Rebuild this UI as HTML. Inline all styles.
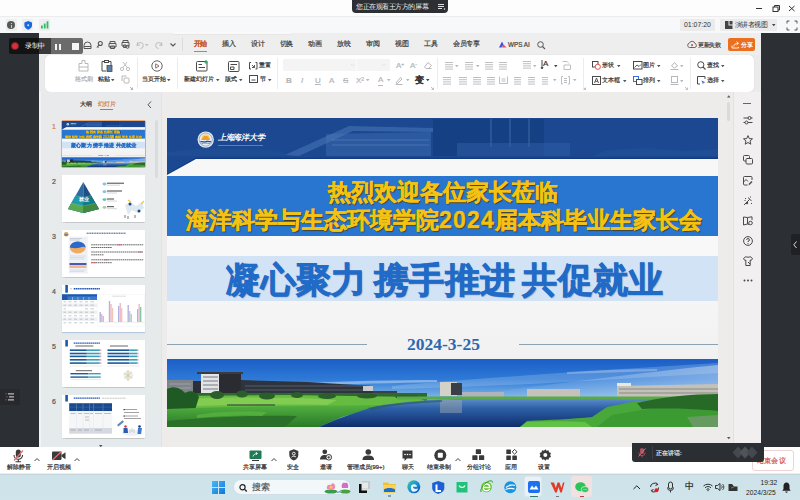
<!DOCTYPE html>
<html><head><meta charset="utf-8">
<style>
*{box-sizing:border-box;margin:0;padding:0}
html,body{width:800px;height:500px;overflow:hidden;background:#fff;font-family:"Liberation Sans",sans-serif;position:relative}
.a{position:absolute}
.t{position:absolute;white-space:nowrap;line-height:1}
svg{position:absolute;overflow:visible}
.tab{position:absolute;top:41px;font-size:6.5px;letter-spacing:-.5px;color:#3a3a3a;white-space:nowrap;line-height:1;-webkit-text-stroke:.2px currentColor}
.rl{position:absolute;font-size:6px;color:#3a3a3a;white-space:nowrap;line-height:1;-webkit-text-stroke:.2px currentColor}
.g{color:#b5b5b5}
.sep{position:absolute;width:1px;background:#ececec}
</style></head><body>
<!-- top white strip -->
<div class="a" style="left:0;top:0;width:800px;height:16px;background:#fdfdfd"></div>
<!-- tooltip -->
<div class="a" style="left:352px;top:-4px;width:96px;height:17px;background:#2c2f34;border-radius:4px"></div>
<div class="t" style="left:356px;top:4px;font-size:6.5px;letter-spacing:-.45px;color:#f2f2f2;font-family:'Liberation Serif',serif">您正在观看王方方的屏幕</div>
<svg style="left:438px;top:4px" width="8" height="6"><path d="M0 .5H6M0 2.5H6M0 4.5H4" stroke="#ddd" stroke-width="1"/><circle cx="6.5" cy="5" r=".8" fill="#ddd"/></svg>
<!-- window controls -->
<div class="a" style="left:756px;top:8px;width:6px;height:1px;background:#333"></div>
<svg style="left:772px;top:5px" width="8" height="7"><rect x="1" y="2" width="5" height="4.5" fill="none" stroke="#333" stroke-width="1"/><path d="M2.5 2V.5H7.5V5H6" fill="none" stroke="#333" stroke-width="1"/></svg>
<svg style="left:789px;top:6px" width="6" height="5"><path d="M0 0L5.5 5M5.5 0L0 5" stroke="#333" stroke-width="1"/></svg>
<!-- meeting top bar -->
<div class="a" style="left:0;top:16px;width:800px;height:17px;background:#f7f8f9;border-top:1px solid #ececec"></div>
<div class="a" style="left:6px;top:19px;width:11px;height:12px;background:#eeeeee;border-radius:2px"></div>
<div class="a" style="left:22px;top:19px;width:11px;height:12px;background:#eeeeee;border-radius:2px"></div>
<div class="a" style="left:39px;top:19px;width:11px;height:12px;background:#eeeeee;border-radius:2px"></div>
<div class="a" style="left:7px;top:21px;width:8px;height:8px;border-radius:50%;background:#585858"></div>
<div class="a" style="left:10.5px;top:22.5px;width:1.2px;height:1.2px;background:#ccc"></div>
<div class="a" style="left:10.5px;top:24.5px;width:1.2px;height:3px;background:#ccc"></div>
<svg style="left:24px;top:20.5px" width="9" height="9"><path d="M4.2 0L8 1.5V4.5C8 6.5 6.2 8 4.2 8.8C2.2 8 .4 6.5 .4 4.5V1.5Z" fill="#1769e0"/><circle cx="4.2" cy="4.3" r="1" fill="#cfe0ff"/></svg>
<svg style="left:41px;top:21px" width="8" height="8"><rect x="0" y="4.5" width="1.8" height="3" fill="#2dbd68"/><rect x="2.8" y="2.5" width="1.8" height="5" fill="#2dbd68"/><rect x="5.6" y=".3" width="1.8" height="7.2" fill="#2dbd68"/></svg>
<div class="a" style="left:680px;top:19px;width:35px;height:12px;background:#ebebeb;border-radius:1px"></div>
<div class="t" style="left:684px;top:21.5px;font-size:6.9px;color:#333">01:07:20</div>
<div class="a" style="left:720px;top:19px;width:57px;height:12px;background:#ebebeb;border-radius:1px"></div>
<svg style="left:725px;top:21px" width="9" height="8"><path d="M0 0H3.5V4.5H7.5V8H0Z" fill="#444"/><rect x="4.5" y="0" width="3" height="3.5" fill="#444"/></svg>
<div class="t" style="left:734.5px;top:21.5px;font-size:6.6px;letter-spacing:-.35px;color:#333">演讲者视图</div>
<svg style="left:772px;top:24px" width="4" height="3"><path d="M0 0H3.5L1.75 2.2Z" fill="#444"/></svg>
<svg style="left:787px;top:21px" width="10" height="9"><path d="M0 2.5V0H2.5M7.5 0H10V2.5M10 6.5V9H7.5M2.5 9H0V6.5" fill="none" stroke="#555" stroke-width="1"/></svg>
<!-- dark side panels -->
<div class="a" style="left:0;top:33px;width:39px;height:414px;background:#2c3034"></div>
<div class="a" style="left:761px;top:33px;width:39px;height:414px;background:#2c3034"></div>
<div class="a" style="left:0;top:389px;width:20px;height:16px;background:#27292d;border-radius:0 2px 2px 0"></div>
<svg style="left:5px;top:393px" width="10" height="8"><path d="M3 .8H9M4 3.8H9M3 6.8H9" stroke="#bbb" stroke-width="1.2"/><path d="M.5 .8H1.5M1.5 3.8H2.5M.5 6.8H1.5" stroke="#888" stroke-width="1"/></svg>
<div class="a" style="left:791px;top:234px;width:9px;height:21px;background:#1f2124;border-radius:2px 0 0 2px"></div>
<svg style="left:793px;top:241px" width="5" height="8"><path d="M3.5 .5L.8 3.8L3.5 7" fill="none" stroke="#ddd" stroke-width="1"/></svg>

<!-- WPS window -->
<div class="a" id="wps" style="left:39px;top:33px;width:722px;height:414px;background:#ebebeb;overflow:hidden">
  <div class="a" style="left:0;top:0;width:722px;height:22px;background:#eeeeee"></div>
  <div class="a" style="left:6px;top:22px;width:709px;height:37px;background:#fff;border-radius:5px;box-shadow:0 0 1px rgba(0,0,0,.2)"></div>
  <div class="a" style="left:0;top:59px;width:122px;height:355px;background:linear-gradient(#e9eaeb,#e5eaec)"></div>
  <div class="a" style="left:0;top:59px;width:2px;height:355px;background:#f1f3f4"></div>
  <div class="a" style="left:122px;top:59px;width:572px;height:355px;background:#edeceb;border-left:1px solid #e3e3e3"></div>
  <div class="a" style="left:694px;top:59px;width:28px;height:355px;background:#f1efef;border-left:1px solid #e2e0e0"></div>
</div>

<!-- quick access toolbar -->
<div class="a" style="left:172px;top:32px;width:120px;height:3px;background:#fafafa;border-radius:0 0 3px 3px;border-bottom:1px solid #e6e6e6"></div>
<svg style="left:83px;top:41px" width="9" height="8"><path d="M1 7.5V4.5A3.5 3.5 0 0 1 8 4.5V7.5Z M1 5.5H8" fill="none" stroke="#555" stroke-width="1"/></svg>
<svg style="left:96px;top:40.5px" width="7" height="8"><circle cx="4.3" cy="2.5" r="2" fill="none" stroke="#555" stroke-width="1.1"/><path d="M3 4L.8 6.5M1.8 5.3L2.8 6.3" stroke="#555" stroke-width="1.1"/></svg>
<svg style="left:108px;top:40.5px" width="9" height="8"><path d="M2 2.5V.5H7V2.5M1 2.5H8V6H1Z M2.5 5H6.5V7.5H2.5Z" fill="none" stroke="#555" stroke-width="1"/></svg>
<svg style="left:121px;top:40px" width="9" height="9"><path d="M2 2.5V.5H7V2.5M1 2.5H8V6H1Z M2.5 5H5V7.5H2.5Z" fill="none" stroke="#555" stroke-width="1"/><circle cx="6.5" cy="6.8" r="1.5" fill="none" stroke="#555" stroke-width="1"/></svg>
<svg style="left:136px;top:41px" width="7" height="8"><path d="M1.5 1.5L1 4.5L3.8 4M1.3 4.3A3 3 0 1 1 4.5 7.5" fill="none" stroke="#bcbcbc" stroke-width="1"/></svg>
<svg style="left:145px;top:44px" width="4" height="3"><path d="M0 0H3.5L1.75 2.2Z" fill="#c0c0c0"/></svg>
<svg style="left:156px;top:41px" width="7" height="8"><path d="M5.5 1.5L6 4.5L3.2 4M5.7 4.3A3 3 0 1 0 2.5 7.5" fill="none" stroke="#bcbcbc" stroke-width="1"/></svg>
<svg style="left:170px;top:43px" width="6" height="4"><path d="M.5 .5L3 3L5.5 .5" fill="none" stroke="#555" stroke-width="1.1"/></svg>
<div class="sep" style="left:182px;top:38px;height:13px;background:#dcdcdc"></div>
<!-- tabs -->
<div class="tab" style="left:193.5px;color:#c8622a;font-weight:bold">开始</div>
<div class="a" style="left:193.5px;top:50.5px;width:13px;height:1.3px;background:#d9784c"></div>
<div class="tab" style="left:222px">插入</div>
<div class="tab" style="left:251px">设计</div>
<div class="tab" style="left:279.5px">切换</div>
<div class="tab" style="left:308px">动画</div>
<div class="tab" style="left:337px">放映</div>
<div class="tab" style="left:366px">审阅</div>
<div class="tab" style="left:395px">视图</div>
<div class="tab" style="left:424px">工具</div>
<div class="tab" style="left:453px">会员专享</div>
<svg style="left:498.5px;top:41px" width="8" height="7"><path d="M0 6.5L3 .5L4.5 3.5L2.5 6.5Z" fill="#3a4fe0"/><path d="M4.5 3.5L7.5 6.5H3Z" fill="#e8446c"/></svg>
<div class="tab" style="left:508px;top:41.5px;font-size:6.3px;letter-spacing:0;color:#444">WPS AI</div>
<svg style="left:537px;top:40.5px" width="9" height="9"><circle cx="3.5" cy="3.5" r="2.8" fill="none" stroke="#555" stroke-width="1"/><path d="M5.5 5.5L8 8" stroke="#555" stroke-width="1.1"/></svg>
<svg style="left:687px;top:40px" width="10" height="9"><path d="M2.5 7.5A2.2 2.2 0 0 1 2.3 3.2A3 3 0 0 1 8 3.6A2 2 0 0 1 7.8 7.5Z" fill="none" stroke="#666" stroke-width="1"/><path d="M4.2 4.3L6 6M6 4.3L4.2 6" stroke="#d33" stroke-width=".9"/></svg>
<div class="tab" style="left:698px;top:41.5px;font-size:6px;color:#444">更新失败</div>
<div class="a" style="left:728px;top:38px;width:27px;height:12.5px;background:#ea6f1f;border-radius:2px"></div>
<svg style="left:731px;top:40.5px" width="9" height="8"><path d="M1 4.5V7H7.5V6M2.8 5.5C3 3.5 4.5 2.3 7 2.3M5.5 .6L7.6 2.3L5.5 4" fill="none" stroke="#fff" stroke-width=".9"/></svg>
<div class="tab" style="left:741px;top:41.5px;font-size:6px;color:#fff">分享</div>

<!-- recording overlay -->
<div class="a" style="left:8.5px;top:38px;width:42px;height:15.5px;background:rgba(12,12,14,.8);border-radius:2px 0 0 2px"></div>
<div class="a" style="left:50.5px;top:38px;width:32.5px;height:15.5px;background:rgba(20,20,20,.6);border-radius:0 2px 2px 0"></div>
<div class="a" style="left:11px;top:42px;width:8px;height:8px;border-radius:50%;background:#d8303c;border:1px solid #7a2228"></div>
<div class="t" style="left:25px;top:42.5px;font-size:6.5px;letter-spacing:-.5px;color:#fff">录制中</div>
<div class="a" style="left:55px;top:43.5px;width:2px;height:6px;background:#f4f4f4"></div>
<div class="a" style="left:59px;top:43.5px;width:2px;height:6px;background:#f4f4f4"></div>
<div class="a" style="left:72px;top:43px;width:6.5px;height:6.5px;background:#f7f7f7"></div>


<!-- ribbon group 1 -->
<svg style="left:78px;top:60px" width="11" height="12"><path d="M4 .5H7V3.5H10V11H1V3.5H4Z M1 7H10" fill="none" stroke="#b8b8b8" stroke-width="1"/></svg>
<div class="rl g" style="left:75px;top:75.5px">格式刷</div>
<svg style="left:100.5px;top:60px" width="12" height="12"><path d="M3.5 1.5H1V11H5 M7.5 1.5H10V5" fill="none" stroke="#4a4a4a" stroke-width="1"/><rect x="3.5" y=".5" width="4" height="2" fill="none" stroke="#4a4a4a" stroke-width="1"/><rect x="6" y="5.5" width="5" height="6" fill="#5b7fa8" stroke="#4a4a4a" stroke-width=".8"/></svg>
<div class="rl" style="left:98px;top:75.5px;color:#333">粘贴</div>
<svg style="left:111px;top:78.5px" width="4" height="3"><path d="M0 0H3.5L1.75 2.2Z" fill="#555"/></svg>
<svg style="left:120px;top:62px" width="10" height="9"><circle cx="2" cy="7" r="1.6" fill="none" stroke="#b8b8b8" stroke-width=".9"/><circle cx="8" cy="7" r="1.6" fill="none" stroke="#b8b8b8" stroke-width=".9"/><path d="M2.8 5.6L7 0M7.2 5.6L3 0" stroke="#b8b8b8" stroke-width=".9"/></svg>
<svg style="left:121px;top:75px" width="9" height="9"><path d="M1 6V1H5.5" fill="none" stroke="#b8b8b8" stroke-width="1"/><rect x="3" y="3" width="5" height="5" rx="1" fill="none" stroke="#b8b8b8" stroke-width="1"/></svg>
<svg style="left:130px;top:86.5px" width="3" height="3"><path d="M0 0L2.5 2.5M2.5 .5V2.5H.5" fill="none" stroke="#999" stroke-width=".7"/></svg>
<div class="sep" style="left:137px;top:58px;height:31px"></div>
<svg style="left:150.5px;top:59.5px" width="12" height="12"><circle cx="6" cy="6" r="5.2" fill="none" stroke="#666" stroke-width="1"/><path d="M4.7 3.8L8 6L4.7 8.2Z" fill="none" stroke="#8a7070" stroke-width="1"/></svg>
<div class="rl" style="left:142px;top:75.5px;color:#333">当页开始</div>
<svg style="left:167px;top:78.5px" width="4" height="3"><path d="M0 0H3.5L1.75 2.2Z" fill="#555"/></svg>
<div class="sep" style="left:177px;top:58px;height:31px"></div>
<!-- group 2 -->
<svg style="left:196px;top:60px" width="13" height="12"><rect x=".5" y="1.5" width="10.5" height="9.5" rx="1" fill="none" stroke="#4a4a4a" stroke-width="1"/><path d="M2.5 4.5H6M2.5 7.5H9" stroke="#4a4a4a" stroke-width="1"/><path d="M10 0V4M8 2H12" stroke="#1ea35a" stroke-width="1"/></svg>
<div class="rl" style="left:184px;top:75.5px;color:#333">新建幻灯片</div>
<svg style="left:216px;top:78.5px" width="4" height="3"><path d="M0 0H3.5L1.75 2.2Z" fill="#555"/></svg>
<svg style="left:228px;top:60.5px" width="12" height="11"><rect x=".5" y=".5" width="10.5" height="10" rx="1" fill="none" stroke="#4a4a4a" stroke-width="1"/><path d="M2.5 3.5H9M2.5 6H6V8.5H2.5Z" fill="none" stroke="#4a4a4a" stroke-width="1"/></svg>
<div class="rl" style="left:225px;top:75.5px;color:#333">版式</div>
<svg style="left:239px;top:78.5px" width="4" height="3"><path d="M0 0H3.5L1.75 2.2Z" fill="#555"/></svg>
<svg style="left:249px;top:61.5px" width="9" height="8"><path d="M2 .5H.5V7H2M6.5 .5H8V7H6.5" fill="none" stroke="#4a4a4a" stroke-width="1"/><path d="M3 3L5.5 5.5M5.5 3V5.5H3" fill="none" stroke="#4a4a4a" stroke-width=".9"/></svg>
<div class="rl" style="left:259px;top:62px;font-size:6px;color:#333">重置</div>
<svg style="left:249px;top:75px" width="9" height="8"><rect x=".5" y=".5" width="8" height="7" fill="none" stroke="#4a4a4a" stroke-width="1"/><path d="M2.5 5H6.5" stroke="#4a4a4a" stroke-width="1"/></svg>
<div class="rl" style="left:260px;top:75.5px;color:#333">节</div>
<svg style="left:268px;top:78.5px" width="4" height="3"><path d="M0 0H3.5L1.75 2.2Z" fill="#555"/></svg>
<div class="sep" style="left:277px;top:58px;height:31px"></div>
<!-- group 3 font -->
<div class="a" style="left:283px;top:59px;width:107px;height:12px;background:#f4f4f4;border-radius:1px"></div>
<div class="a" style="left:356px;top:59px;width:1px;height:12px;background:#fafafa"></div>
<svg style="left:351px;top:64px" width="4" height="3"><path d="M0 0L1.75 2L3.5 0" fill="none" stroke="#ddd" stroke-width=".8"/></svg>
<svg style="left:382px;top:64px" width="4" height="3"><path d="M0 0L1.75 2L3.5 0" fill="none" stroke="#ddd" stroke-width=".8"/></svg>
<div class="rl g" style="left:396px;top:62px;font-size:8px">A<sup style="font-size:5px;vertical-align:top;line-height:1">+</sup></div>
<div class="rl g" style="left:410px;top:62px;font-size:8px">A<sup style="font-size:5px;vertical-align:top;line-height:1">-</sup></div>
<svg style="left:424px;top:62px" width="8" height="7"><path d="M4 .5L7.5 3.5L4.5 6.5H2L.5 5Z M2 6.5H7.5" fill="none" stroke="#b8b8b8" stroke-width="1"/></svg>
<div class="rl g" style="left:286px;top:77px;font-size:8px;font-weight:bold">B</div>
<div class="rl g" style="left:301px;top:77px;font-size:8px;font-style:italic">I</div>
<div class="rl g" style="left:315px;top:77px;font-size:8px;text-decoration:underline">U</div>
<div class="rl g" style="left:329px;top:77px;font-size:8px">A</div>
<div class="rl g" style="left:343px;top:77px;font-size:8px;text-decoration:line-through">S</div>
<div class="rl g" style="left:356px;top:77px;font-size:8px">X<sup style="font-size:5px;vertical-align:top;line-height:1">2</sup></div>
<svg style="left:366px;top:79px" width="4" height="3"><path d="M0 0H3.5L1.75 2.2Z" fill="#b8b8b8"/></svg>
<div class="rl g" style="left:378px;top:76px;font-size:8px;border-bottom:1.2px solid #bbb;padding-bottom:.5px">A</div>
<svg style="left:387px;top:79px" width="4" height="3"><path d="M0 0H3.5L1.75 2.2Z" fill="#b8b8b8"/></svg>
<svg style="left:395px;top:76px" width="8" height="9"><path d="M1 7L5.5 1.5L7 3L2.5 7.5Z M.5 8.5H7.5" fill="none" stroke="#b8b8b8" stroke-width="1"/></svg>
<svg style="left:406px;top:79px" width="4" height="3"><path d="M0 0H3.5L1.75 2.2Z" fill="#b8b8b8"/></svg>
<div class="rl" style="left:415px;top:76px;font-size:9px;color:#333;font-weight:bold">变</div>
<svg style="left:426px;top:79px" width="4" height="3"><path d="M0 0H3.5L1.75 2.2Z" fill="#444"/></svg>
<svg style="left:431px;top:86.5px" width="3" height="3"><path d="M0 0L2.5 2.5M2.5 .5V2.5H.5" fill="none" stroke="#aaa" stroke-width=".7"/></svg>
<div class="sep" style="left:437px;top:58px;height:31px"></div>
<svg style="left:443px;top:77px" width="9" height="8"><path d="M0 0.5H8" stroke="#b8b8b8" stroke-width=".9"/><path d="M0 2.7H8" stroke="#b8b8b8" stroke-width=".9"/><path d="M0 4.9H8" stroke="#b8b8b8" stroke-width=".9"/><path d="M0 7.1000000000000005H8" stroke="#b8b8b8" stroke-width=".9"/></svg><svg style="left:459px;top:77px" width="9" height="8"><path d="M0 0.5H8" stroke="#b8b8b8" stroke-width=".9"/><path d="M0 2.7H8" stroke="#b8b8b8" stroke-width=".9"/><path d="M0 4.9H8" stroke="#b8b8b8" stroke-width=".9"/><path d="M0 7.1000000000000005H8" stroke="#b8b8b8" stroke-width=".9"/></svg><svg style="left:473px;top:77px" width="9" height="8"><path d="M0 0.5H8" stroke="#b8b8b8" stroke-width=".9"/><path d="M0 2.7H8" stroke="#b8b8b8" stroke-width=".9"/><path d="M0 4.9H8" stroke="#b8b8b8" stroke-width=".9"/><path d="M0 7.1000000000000005H8" stroke="#b8b8b8" stroke-width=".9"/></svg><svg style="left:487px;top:77px" width="9" height="8"><path d="M0 0.5H8" stroke="#b8b8b8" stroke-width=".9"/><path d="M0 2.7H8" stroke="#b8b8b8" stroke-width=".9"/><path d="M0 4.9H8" stroke="#b8b8b8" stroke-width=".9"/><path d="M0 7.1000000000000005H8" stroke="#b8b8b8" stroke-width=".9"/></svg><svg style="left:445px;top:62px" width="9" height="8"><path d="M0 0.5H8" stroke="#b8b8b8" stroke-width=".9"/><path d="M0 2.7H8" stroke="#b8b8b8" stroke-width=".9"/><path d="M0 4.9H8" stroke="#b8b8b8" stroke-width=".9"/><path d="M0 7.1000000000000005H8" stroke="#b8b8b8" stroke-width=".9"/></svg><svg style="left:455px;top:65px" width="4" height="3"><path d="M0 0H3.5L1.75 2.2Z" fill="#b8b8b8"/></svg><svg style="left:465px;top:62px" width="9" height="8"><path d="M0 0.5H8" stroke="#b8b8b8" stroke-width=".9"/><path d="M0 2.7H8" stroke="#b8b8b8" stroke-width=".9"/><path d="M0 4.9H8" stroke="#b8b8b8" stroke-width=".9"/><path d="M0 7.1000000000000005H8" stroke="#b8b8b8" stroke-width=".9"/></svg><svg style="left:476px;top:65px" width="4" height="3"><path d="M0 0H3.5L1.75 2.2Z" fill="#b8b8b8"/></svg><svg style="left:485px;top:62px" width="9" height="8"><path d="M0 0.5H8" stroke="#b8b8b8" stroke-width=".9"/><path d="M0 2.7H8" stroke="#b8b8b8" stroke-width=".9"/><path d="M0 4.9H8" stroke="#b8b8b8" stroke-width=".9"/><path d="M0 7.1000000000000005H8" stroke="#b8b8b8" stroke-width=".9"/></svg><svg style="left:499px;top:62px" width="9" height="8"><path d="M0 0.5H8" stroke="#b8b8b8" stroke-width=".9"/><path d="M0 2.7H8" stroke="#b8b8b8" stroke-width=".9"/><path d="M0 4.9H8" stroke="#b8b8b8" stroke-width=".9"/><path d="M0 7.1000000000000005H8" stroke="#b8b8b8" stroke-width=".9"/></svg><svg style="left:523px;top:61px" width="9" height="8"><path d="M0 0.5H8" stroke="#b8b8b8" stroke-width=".9"/><path d="M0 2.7H8" stroke="#b8b8b8" stroke-width=".9"/><path d="M0 4.9H8" stroke="#b8b8b8" stroke-width=".9"/><path d="M0 7.1000000000000005H8" stroke="#b8b8b8" stroke-width=".9"/></svg><svg style="left:533px;top:65px" width="4" height="3"><path d="M0 0H3.5L1.75 2.2Z" fill="#b8b8b8"/></svg><div class="rl" style="left:543px;top:60px;font-size:8px;color:#333">A</div><svg style="left:541px;top:60px" width="3" height="10"><path d="M1 0V8.5M0 7L1 9L2 7" fill="none" stroke="#333" stroke-width=".9"/></svg><svg style="left:554px;top:65px" width="4" height="3"><path d="M0 0H3.5L1.75 2.2Z" fill="#444"/></svg><svg style="left:562px;top:61px" width="9" height="9"><path d="M.5 .5H5L7 2.5M2 4H8.5V8.5H2Z" fill="none" stroke="#b8b8b8" stroke-width=".9"/></svg><svg style="left:499px;top:76px" width="9" height="8"><path d="M.5 .5V7.5H8.5V.5M2.5 3H6.5M2.5 5H6.5" fill="none" stroke="#b8b8b8" stroke-width=".9"/></svg><svg style="left:514px;top:77px" width="8" height="8"><path d="M0 0.5H7" stroke="#b8b8b8" stroke-width=".9"/><path d="M0 2.7H7" stroke="#b8b8b8" stroke-width=".9"/><path d="M0 4.9H7" stroke="#b8b8b8" stroke-width=".9"/><path d="M0 7.1000000000000005H7" stroke="#b8b8b8" stroke-width=".9"/></svg><svg style="left:528px;top:77px" width="8" height="8"><path d="M0 0.5H7" stroke="#b8b8b8" stroke-width=".9"/><path d="M0 2.7H7" stroke="#b8b8b8" stroke-width=".9"/><path d="M0 4.9H7" stroke="#b8b8b8" stroke-width=".9"/><path d="M0 7.1000000000000005H7" stroke="#b8b8b8" stroke-width=".9"/></svg><svg style="left:542px;top:77px" width="7" height="8"><path d="M0 0.5H6" stroke="#b8b8b8" stroke-width=".9"/><path d="M0 2.7H6" stroke="#b8b8b8" stroke-width=".9"/><path d="M0 4.9H6" stroke="#b8b8b8" stroke-width=".9"/><path d="M0 7.1000000000000005H6" stroke="#b8b8b8" stroke-width=".9"/></svg><svg style="left:553px;top:79px" width="4" height="3"><path d="M0 0H3.5L1.75 2.2Z" fill="#b8b8b8"/></svg><svg style="left:561px;top:76px" width="9" height="9"><path d="M2 .5H.5V8H2M7 .5H8.5V8H7M3 2.5H6M3 4.5H6M3 6.5H6" fill="none" stroke="#b8b8b8" stroke-width=".9"/></svg><svg style="left:573px;top:79px" width="4" height="3"><path d="M0 0H3.5L1.75 2.2Z" fill="#b8b8b8"/></svg><svg style="left:583px;top:86.5px" width="3" height="3"><path d="M0 0L2.5 2.5M2.5 .5V2.5H.5" fill="none" stroke="#aaa" stroke-width=".7"/></svg><div class="sep" style="left:583px;top:58px;height:31px"></div>
<!-- group insert -->
<svg style="left:592px;top:61px" width="9" height="9"><rect x=".5" y=".5" width="5.5" height="5.5" fill="none" stroke="#4a4a4a" stroke-width="1"/><circle cx="5.8" cy="5.8" r="2.6" fill="#fff" stroke="#d55" stroke-width="1"/></svg>
<div class="rl" style="left:602px;top:62px;color:#333">形状</div><svg style="left:617px;top:65px" width="4" height="3"><path d="M0 0H3.5L1.75 2.2Z" fill="#555"/></svg>
<svg style="left:592px;top:76px" width="9" height="9"><rect x=".5" y=".5" width="8" height="8" fill="none" stroke="#4a4a4a" stroke-width="1"/><path d="M2.5 7L4.5 2L6.5 7M3.2 5.3H5.8" fill="none" stroke="#4a4a4a" stroke-width=".9"/></svg>
<div class="rl" style="left:602px;top:77px;color:#333">文本框</div><svg style="left:623px;top:80px" width="4" height="3"><path d="M0 0H3.5L1.75 2.2Z" fill="#555"/></svg>
<svg style="left:633px;top:61px" width="10" height="9"><rect x=".5" y=".5" width="8.5" height="7.5" fill="none" stroke="#4a4a4a" stroke-width="1"/><path d="M1.5 6.5L4 4L6 5.5L8 3.5" fill="none" stroke="#4a4a4a" stroke-width=".9"/></svg>
<div class="rl" style="left:643px;top:62px;color:#333">图片</div><svg style="left:657px;top:65px" width="4" height="3"><path d="M0 0H3.5L1.75 2.2Z" fill="#555"/></svg>
<svg style="left:633px;top:76px" width="10" height="9"><rect x=".5" y=".5" width="5" height="5" fill="none" stroke="#3a6fd8" stroke-width="1"/><rect x="3.5" y="3.5" width="5.5" height="5" fill="#fff" stroke="#4a4a4a" stroke-width="1"/></svg>
<div class="rl" style="left:643px;top:77px;color:#333">排列</div><svg style="left:657px;top:80px" width="4" height="3"><path d="M0 0H3.5L1.75 2.2Z" fill="#555"/></svg>
<svg style="left:670px;top:61px" width="9" height="9"><path d="M1.5 5L4.5 1.5L7.5 5L4.5 7Z M.5 8.5H8.5" fill="none" stroke="#b8b8b8" stroke-width="1"/></svg><svg style="left:680px;top:65px" width="4" height="3"><path d="M0 0H3.5L1.75 2.2Z" fill="#b8b8b8"/></svg>
<svg style="left:670px;top:76px" width="9" height="9"><rect x="1.5" y=".5" width="6" height="6" fill="none" stroke="#b8b8b8" stroke-width="1"/><path d="M.5 8.5H8.5" stroke="#b8b8b8" stroke-width="1"/></svg><svg style="left:680px;top:80px" width="4" height="3"><path d="M0 0H3.5L1.75 2.2Z" fill="#b8b8b8"/></svg>
<svg style="left:685px;top:86.5px" width="3" height="3"><path d="M0 0L2.5 2.5M2.5 .5V2.5H.5" fill="none" stroke="#aaa" stroke-width=".7"/></svg>
<div class="sep" style="left:690px;top:58px;height:31px"></div>
<svg style="left:697px;top:61px" width="9" height="9"><circle cx="3.8" cy="3.8" r="3.1" fill="none" stroke="#4a4a4a" stroke-width="1"/><path d="M6 6L8.5 8.5" stroke="#4a4a4a" stroke-width="1.1"/></svg>
<div class="rl" style="left:707px;top:62px;color:#333">查找</div><svg style="left:721px;top:65px" width="4" height="3"><path d="M0 0H3.5L1.75 2.2Z" fill="#555"/></svg>
<svg style="left:697px;top:76px" width="9" height="9"><path d="M3 8H.5V.5H8V3" fill="none" stroke="#4a4a4a" stroke-width="1"/><path d="M4.5 4.5L8.5 6.3L6.5 6.8L6 8.5Z" fill="#3a6fd8"/></svg>
<div class="rl" style="left:707px;top:77px;color:#333">选择</div><svg style="left:721px;top:80px" width="4" height="3"><path d="M0 0H3.5L1.75 2.2Z" fill="#555"/></svg>


<!-- thumbnail pane header -->
<div class="rl" style="left:80px;top:100.5px;font-size:6px;color:#333">大纲</div>
<div class="rl" style="left:98px;top:100.5px;font-size:6px;color:#d0804a">幻灯片</div>
<div class="a" style="left:100px;top:108.5px;width:13px;height:1.3px;background:#c87040"></div>
<svg style="left:146.5px;top:100.5px" width="5" height="8"><path d="M4 .5L1 3.8L4 7" fill="none" stroke="#555" stroke-width="1"/></svg>
<div class="a" style="left:155px;top:120px;width:3px;height:58px;background:#d9dbdc;border-radius:2px"></div>
<!-- slide numbers -->
<div class="rl" style="left:52px;top:123px;font-size:7px;color:#d0804a">1</div>
<div class="rl" style="left:52px;top:178px;font-size:7px;color:#555">2</div>
<div class="rl" style="left:52px;top:233px;font-size:7px;color:#555">3</div>
<div class="rl" style="left:52px;top:288px;font-size:7px;color:#555">4</div>
<div class="rl" style="left:52px;top:343px;font-size:7px;color:#555">5</div>
<div class="rl" style="left:52px;top:398px;font-size:7px;color:#555">6</div>
<!-- thumbs -->
<div class="a" style="left:61px;top:119.5px;width:85px;height:48px;border:1px solid #eaa878;border-radius:2px;background:#eaa878"></div>
<!--T1S--><div class="a" style="left:62px;top:120.5px;width:83px;height:46px;overflow:hidden;filter:blur(.35px)"><div class="a" style="left:0;top:0;transform:scale(0.1506);transform-origin:0 0;width:551px;height:309px;background:#f3f3f3;overflow:hidden">
  <div class="a" style="left:0;top:0;width:551px;height:41px;background:#1b4890"></div>
  <svg style="left:0;top:0" width="551" height="41"><path d="M159 41V16L264 14V41Z" fill="#3d6cb0" opacity=".5"/><path d="M118 37L182 8L266 10V14L186 13L132 38Z" fill="#4a78b8" opacity=".55"/><path d="M165 22H262M165 27H262" stroke="#6a90c8" stroke-width="1.2" opacity=".45"/><path d="M266 41V1H377V41Z" fill="#123876" opacity=".45"/><path d="M324 1V29M343 1V29M362 1V29" stroke="#4a74b0" stroke-width="1.6" opacity=".5"/><path d="M290 41V25H403V41Z" fill="#3464aa" opacity=".45"/><path d="M420 41L440 32L480 30L520 33L551 31V41Z" fill="#2c5ca2" opacity=".35"/><path d="M0 41V34L40 30L100 32L118 35V41Z" fill="#2a5aa0" opacity=".3"/></svg>
  <svg style="left:0;top:38px" width="551" height="21"><path d="M0 20V0H551V2.5H29Z" fill="#1b4890"/><path d="M0 19L29 2.5H551" fill="none" stroke="#123a80" stroke-width="1.6"/><path d="M0 20.5V19L29 3H551V20.5Z" fill="#f7f7f7"/></svg>
  <div class="a" style="left:0;top:58px;width:551px;height:60px;background:#2876d0"></div>
  <div class="a" style="left:0;top:118px;width:551px;height:19.5px;background:#f8f8f8"></div>
  <div class="a" style="left:0;top:137.5px;width:551px;height:45px;background:#d3e3f6"></div>
  <div class="a" style="left:0;top:183px;width:551px;height:58px;background:linear-gradient(#f5f5f5,#f1f1f1)"></div>
  <div class="a" style="left:0;top:226px;width:200px;height:1px;background:#8ea2b4"></div>
  <div class="a" style="left:352px;top:226px;width:199px;height:1px;background:#8ea2b4"></div>
  <!-- logo -->
  <svg style="left:30px;top:13px" width="18" height="18"><circle cx="8.7" cy="8.6" r="8.2" fill="#e4ebf3"/><circle cx="8.7" cy="8.6" r="6.6" fill="none" stroke="#8090b0" stroke-width=".7"/><path d="M4.5 9A4.2 4.2 0 0 1 12.9 9Z" fill="#f0a028"/><path d="M5.2 7.3A3.5 3.5 0 0 1 12.2 7.3" fill="none" stroke="#f8d040" stroke-width="1"/><path d="M3.3 10.2C5 9.3 7 10.8 9 10C11 9.3 12.5 10 14.2 10.2V11.5C12.5 11.3 11 10.6 9 11.4C7 12.1 5 10.7 3.3 11.6Z" fill="#2a4a90"/><path d="M4.5 12.5C6.5 12 10.5 12 13 12.5" fill="none" stroke="#5a7ab0" stroke-width=".8"/></svg>
  <div class="t" style="left:51px;top:16px;font-size:8px;color:#fff;font-weight:bold;font-style:italic;letter-spacing:-.3px">上海海洋大学</div>
  <div class="a" style="left:51px;top:27px;width:45px;height:1px;background:rgba(255,255,255,.3)"></div>
  <!-- titles -->
  <div class="t" style="left:161px;top:62.5px;font-size:23px;font-weight:bold;color:#f6c211;-webkit-text-stroke:.4px #f6c211;text-shadow:1px 1px 1px #403a20;letter-spacing:0">热烈欢迎各位家长莅临</div>
  <div class="t" style="left:19px;top:90.5px;font-size:23px;font-weight:bold;color:#f6c211;-webkit-text-stroke:.4px #f6c211;text-shadow:1px 1px 1px #403a20;letter-spacing:0">海洋科学与生态环境学院<span style="letter-spacing:1.2px">2024</span>届本科毕业生家长会</div>
  <div class="t" style="left:58.5px;top:144px;font-size:35px;letter-spacing:.3px;word-spacing:-2.8px;font-weight:bold;color:#1f6bc7;-webkit-text-stroke:.8px #1f6bc7;text-shadow:1px 1px 1px rgba(20,50,100,.35)">凝心聚力 携手推进 共促就业</div>
  <div class="t" style="left:240px;top:217.5px;font-size:17.5px;font-weight:bold;color:#2c68b2;font-family:'Liberation Serif',serif">2024-3-25</div>
  <!-- photo -->
  <svg style="left:0;top:241px" width="551" height="68" viewBox="0 0 551 68">
    <defs>
      <linearGradient id="sky2" x1="0" y1="0" x2="0" y2="1"><stop offset="0" stop-color="#1c5ec6"/><stop offset=".3" stop-color="#2e7ad8"/><stop offset=".55" stop-color="#7ab0e4"/></linearGradient>
      <linearGradient id="lake2" x1="0" y1="0" x2="0" y2="1"><stop offset="0" stop-color="#5a8cc8"/><stop offset=".35" stop-color="#2c5ea6"/><stop offset="1" stop-color="#0e2e6a"/></linearGradient>
      <linearGradient id="hedge2" x1="0" y1="0" x2="0" y2="1"><stop offset="0" stop-color="#52b040"/><stop offset="1" stop-color="#2a7a28"/></linearGradient>
    </defs>
    <rect width="551" height="68" fill="url(#sky2)"/>
    <linearGradient id="skyr" x1="0" y1="0" x2="1" y2="0"><stop offset="0" stop-color="#cfe2f6" stop-opacity="0"/><stop offset="1" stop-color="#cfe2f6" stop-opacity=".5"/></linearGradient><path d="M300 36C380 26 470 14 551 6V38H300Z" fill="url(#skyr)"/><path d="M225 27C300 20 420 12 551 4V14C450 20 330 28 225 30Z" fill="#d8e8f8" opacity=".22"/>
    <path d="M140 24C180 22 230 21 270 21V23C230 24 180 25 140 26Z" fill="#e0ecf8" opacity=".45"/>
    <path d="M400 13C430 11 460 10 490 10V12C460 13 430 14 400 15Z" fill="#e0ecf8" opacity=".3"/>
    <!-- buildings -->
    <rect x="0" y="21" width="26" height="14" fill="#7e848a"/>
    <path d="M2 25H24M2 29H24" stroke="#9aa0a6" stroke-width="1"/>
    <rect x="26" y="22" width="10" height="14" fill="#2c3036"/>
    <rect x="34" y="14" width="19" height="21" fill="#e2e4e6"/>
    <path d="M36 18H51M36 22H51M36 26H51M36 30H51" stroke="#6a6e74" stroke-width=".9"/>
    <rect x="52" y="14" width="22" height="21" fill="#2a2c32"/>
    <path d="M30 13H76V15H30Z" fill="#3a3c42"/>
    <path d="M74 21L140 23L206 27V37H74Z" fill="#2e343e"/>
    <path d="M78 27H200M78 31H200" stroke="#5a626c" stroke-width=".9"/>
    <rect x="196" y="27" width="10" height="5" fill="#c8ccd0"/>
    <rect x="206" y="32" width="24" height="4" fill="#3a4048"/>
    <rect x="273" y="23" width="17" height="14" fill="#d4d2c8"/>
    <rect x="284" y="24" width="11" height="12" fill="#3a3e46"/>
    <rect x="295" y="33" width="42" height="5" fill="#aeb4ba"/>
    <rect x="360" y="30" width="53" height="8" fill="#c4c2ba"/>
    <path d="M450 27L551 25V38H450Z" fill="#c4c2b8"/>
    <path d="M452 30H551M452 34H551" stroke="#8a8a84" stroke-width="1"/>
    <rect x="450" y="24" width="14" height="3" fill="#e8e8e4"/>
    <!-- ground left -->
    <path d="M0 34H260V42H0Z" fill="#2e6a30"/>
    <path d="M0 37L120 36L250 38L262 44L200 50L0 52Z" fill="#66bc40"/>
    <path d="M20 40C60 38 120 38 170 41L160 46C110 45 60 46 20 47Z" fill="#82cc52"/>
    <g fill="#2a5e2a"><ellipse cx="50" cy="36" rx="7" ry="4"/><ellipse cx="75" cy="35" rx="6" ry="3.5"/><ellipse cx="100" cy="37" rx="8" ry="3.5"/><ellipse cx="130" cy="36" rx="6" ry="3"/><ellipse cx="160" cy="37" rx="9" ry="3"/><ellipse cx="200" cy="37" rx="10" ry="2.5"/><ellipse cx="240" cy="38" rx="12" ry="2"/></g>
    <path d="M0 30C8 26 14 30 18 34C24 30 30 33 32 38L24 64H0Z" fill="#1f5a24"/>
    <path d="M60 45H108V47H60Z" fill="#3a4a40" opacity=".6"/>
    <path d="M0 50L60 48L120 47L215 46L175 58L152 68H0Z" fill="url(#hedge2)"/>
    <path d="M0 62C40 58 90 56 130 57L118 68H0Z" fill="#2a7028"/>
    <path d="M30 56C50 52 80 52 100 53L95 57C75 56 50 57 30 59Z" fill="#5ab840" opacity=".7"/>
    <!-- horizon right -->
    <path d="M230 37.5H551V40.5H230Z" fill="#5aaa48"/>
    <!-- lake -->
    <path d="M152 68C165 62 185 54 210 47C240 42 260 41 290 40H551V68Z" fill="url(#lake2)"/>
    <path d="M273 41H295V54H273Z" fill="#a8acaa" opacity=".45"/>
    <path d="M200 49C230 44 250 42 275 41V43C250 44 225 46 205 51Z" fill="#2a5a50" opacity=".6"/>
    <!-- lily pads right -->
    <path d="M353 68L360 62C380 61 405 60 425 58L440 48L470 42L551 38V68Z" fill="#48a83a"/>
    <path d="M430 68L445 56C470 52 490 48 510 46L551 44V68Z" fill="#3c9a32"/>
    <path d="M470 44C495 38 525 35 551 35V52C530 50 500 49 475 50Z" fill="#276a28"/>
    <path d="M353 68L360 63C380 62 400 62 418 63L425 68Z" fill="#62c248"/>
    <path d="M520 58L551 56V68H526Z" fill="#8a9a88" opacity=".55"/>
  </svg>
</div></div><!--T1E-->
<div class="a" style="left:62px;top:175px;width:83px;height:47px;background:#fff;overflow:hidden;box-shadow:0 .5px 1px rgba(0,0,0,.15)"><svg style="left:0;top:0" width="83" height="47">
<path d="M21.3 7L6 34L21.3 38Z" fill="#2f6aa0"/><path d="M21.3 7L37 34L21.3 38Z" fill="#1f4f86"/>
<path d="M13.5 20.5L6 34L21.3 38V22.5Z" fill="#1f9aa8"/><path d="M29 20.5L37 34L21.3 38V22.5Z" fill="#137a8a"/>
<path d="M9.2 28.3L6 34L21.3 38V31Z" fill="#5aa850"/><path d="M33.5 28.3L37 34L21.3 38V31Z" fill="#3f8a3f"/>
<path d="M13.5 20.5L21.3 22.5L29 20.5M9.2 28.3L21.3 31L33.5 28.3" fill="none" stroke="#fff" stroke-width=".3" opacity=".5"/>
<ellipse cx="42.5" cy="9" rx="2" ry="1.4" fill="#8ac0e0"/><ellipse cx="42.5" cy="16.7" rx="2" ry="1.4" fill="#8ac0e0"/><ellipse cx="42.5" cy="24.6" rx="2" ry="1.4" fill="#6ac0b0"/><ellipse cx="42.5" cy="32.4" rx="2" ry="1.4" fill="#b0c8a8"/>
<path d="M45 8.2H62M45 16H60M45 24H52M45 31.7H52" stroke="#444" stroke-width="1"/>
<path d="M45 10.2H58M45 18H55M45 26H55M45 33.7H55" stroke="#bbb" stroke-width=".6"/>
<path d="M63 30L68 27L74 31L80 27L82 33L76 38L70 35L66 40Z" fill="#dde8f0"/>
<circle cx="68" cy="29" r="1.5" fill="#1a4a80"/><circle cx="77" cy="36" r="1.5" fill="#1a4a80"/><path d="M66 25L69 27M79 29L82 26" stroke="#f0c840" stroke-width="1.2"/>
<path d="M63 40V43M66 41V44M73 40V43" stroke="#555" stroke-width=".8"/>
</svg><div class="t" style="left:16.5px;top:21.5px;font-size:5px;color:#fff;font-weight:bold">就业</div></div>
<div class="a" style="left:62px;top:230px;width:83px;height:47px;background:#fff;overflow:hidden;box-shadow:0 .5px 1px rgba(0,0,0,.15)"><svg style="left:0;top:0" width="83" height="47">
<circle cx="4.2" cy="4.3" r="2.3" fill="#e8a040"/><path d="M2 4.3A2.3 2.3 0 0 0 6.4 4.3Z" fill="#4a80c0"/>
<path d="M24.7 3.2H64" stroke="#2a4a90" stroke-width="1" stroke-dasharray="1.2 .5"/>
<rect x="6.7" y="6.6" width="19" height="37" fill="#eef2f8"/>
<path d="M8 8.5H20M8 10H18" stroke="#aab" stroke-width=".5"/>
<ellipse cx="15.7" cy="17.5" rx="7.9" ry="5.9" fill="#f2aa60"/>
<path d="M7.8 17.5A7.9 5.9 0 0 1 23.6 17.5C20 15 18 20 7.8 17.5Z" fill="#2a6ac8"/>
<path d="M8 26H24M8 27.5H22M8 29H23" stroke="#c8d0dc" stroke-width=".6"/>
<rect x="7.5" y="33" width="17" height="2.2" fill="#4a5ab0"/><rect x="7.5" y="35.8" width="17" height="2.2" fill="#f0b888"/>
<path d="M8 40H24M8 41.5H22" stroke="#c8d0dc" stroke-width=".6"/>
<path d="M29.2 14.8H81.5M29.2 17.5H50M29.2 22H81M29.2 24.8H42M29.2 29.8H81.5M29.2 32.7H50" stroke="#555" stroke-width=".9" stroke-dasharray="1.6 .5"/>
<path d="M55 14.8H60M76 22H80M42 29.8H46M29.2 32.7H34" stroke="#d86070" stroke-width=".9"/>
</svg></div>
<div class="a" style="left:62px;top:285px;width:83px;height:47px;background:#fff;overflow:hidden;box-shadow:0 1px 1px rgba(90,140,200,.35)"><svg style="left:0;top:0" width="83" height="47">
<rect x="3.3" y="0" width="2.6" height="7.7" fill="#1a5aa8"/>
<path d="M11.7 3.8H38" stroke="#2a5ab8" stroke-width="1.4" stroke-dasharray="1.5 .4"/>
<path d="M8 3.8H10" stroke="#999" stroke-width=".6"/>
<rect x="0" y="9.4" width="35" height="5.6" fill="#3a7ad0"/>
<rect x="0" y="9.4" width="5.6" height="5.6" fill="#1f5aa8"/><rect x="5.6" y="9.4" width="29.4" height="2" fill="#1f5aa8"/>
<path d="M10.5 12V15M16 12V15M21.5 12V15M27 12V15" stroke="#fff" stroke-width=".4"/>
<g fill="#eef0f4"><rect x="0" y="18.5" width="35" height="3.5"/><rect x="0" y="25.5" width="35" height="3.5"/><rect x="0" y="32.5" width="35" height="3.5"/></g>
<g stroke="#9aa" stroke-width=".6"><path d="M1.5 16.8H4M6.5 16.8H9.5M12 16.8H15M17.5 16.8H20.5M23 16.8H26M28.5 16.8H32M1.5 20.2H4M6.5 20.2H9.5M12 20.2H15M17.5 20.2H20.5M23 20.2H26M28.5 20.2H32M1.5 23.8H4M23 23.8H26M28.5 23.8H32M1.5 27.2H4M6.5 27.2H9.5M12 27.2H15M17.5 27.2H20.5M23 27.2H26M28.5 27.2H32M1.5 30.8H4M6.5 30.8H9.5M12 30.8H15M17.5 30.8H20.5M23 30.8H26M28.5 30.8H32M1.5 34.2H4M6.5 34.2H9.5M12 34.2H15M17.5 34.2H20.5M23 34.2H26M28.5 34.2H32M1.5 37.8H4M6.5 37.8H9.5M12 37.8H15M17.5 37.8H20.5M23 37.8H26M28.5 37.8H32"/></g>
<rect x="35.5" y="9.5" width="47" height="32" fill="#fff" stroke="#eee" stroke-width=".4"/>
<path d="M50 11.2H64" stroke="#bbb" stroke-width=".5"/>
<g opacity=".75">
<rect x="37.5" y="27" width="1.4" height="10" fill="#9a9ad8"/><rect x="39" y="29" width="1.4" height="8" fill="#e8a0b0"/><rect x="40.5" y="31" width="1.4" height="6" fill="#c890d8"/>
<rect x="46.8" y="16" width="1.4" height="21" fill="#9a9ad8"/><rect x="48.3" y="19" width="1.4" height="18" fill="#e8a0b0"/><rect x="49.8" y="23" width="1.4" height="14" fill="#f0b0a0"/>
<rect x="56" y="21" width="1.4" height="16" fill="#9a9ad8"/><rect x="57.5" y="18" width="1.4" height="19" fill="#e8a0b0"/><rect x="59" y="23" width="1.4" height="14" fill="#f0b0a0"/>
<rect x="65.5" y="20" width="1.4" height="17" fill="#9a9ad8"/><rect x="67" y="26" width="1.4" height="11" fill="#e8a0b0"/><rect x="68.5" y="29" width="1.4" height="8" fill="#80c8a0"/>
<rect x="75" y="24" width="1.4" height="13" fill="#9a9ad8"/><rect x="76.5" y="19" width="1.4" height="18" fill="#e8a0b0"/><rect x="78" y="22" width="1.4" height="15" fill="#60b890"/>
</g>
<path d="M36.5 37.2H82" stroke="#ccc" stroke-width=".4"/>
</svg></div>
<div class="a" style="left:62px;top:340px;width:83px;height:47px;background:#fff;overflow:hidden;box-shadow:0 .5px 1px rgba(0,0,0,.15)"><svg style="left:0;top:0" width="83" height="47"><rect x="3.3" y="0" width="2.6" height="6.5" fill="#1a5aa8"/><path d="M11.7 3.2H38" stroke="#2a5ab8" stroke-width="1.3" stroke-dasharray="1.5 .4"/><path d="M13.4 6H31.4M48 6H66M13.8 30.7H30" stroke="#555" stroke-width=".9"/><rect x="7.8" y="9.4" width="17" height="1.6" fill="#1a5a98"/><rect x="24.8" y="9.4" width="13" height="1.6" fill="#3aa0b8"/><rect x="37.8" y="9.4" width="1.5" height="1.6" fill="#d8a0c0"/><rect x="45.5" y="9.4" width="22" height="1.6" fill="#1a5a98"/><rect x="67.5" y="9.4" width="8" height="1.6" fill="#3aa0b8"/><rect x="75.5" y="9.4" width="1" height="1.6" fill="#d8a0c0"/><rect x="7.8" y="12.7" width="17" height="1.6" fill="#1a5a98"/><rect x="24.8" y="12.7" width="13" height="1.6" fill="#3aa0b8"/><rect x="37.8" y="12.7" width="1.5" height="1.6" fill="#d8a0c0"/><rect x="45.5" y="12.7" width="22" height="1.6" fill="#1a5a98"/><rect x="67.5" y="12.7" width="8" height="1.6" fill="#3aa0b8"/><rect x="75.5" y="12.7" width="1" height="1.6" fill="#d8a0c0"/><rect x="7.8" y="15.6" width="17" height="1.6" fill="#1a5a98"/><rect x="24.8" y="15.6" width="13" height="1.6" fill="#3aa0b8"/><rect x="37.8" y="15.6" width="1.5" height="1.6" fill="#d8a0c0"/><rect x="45.5" y="15.6" width="22" height="1.6" fill="#1a5a98"/><rect x="67.5" y="15.6" width="8" height="1.6" fill="#3aa0b8"/><rect x="75.5" y="15.6" width="1" height="1.6" fill="#d8a0c0"/><rect x="7.8" y="19" width="17" height="1.6" fill="#1a5a98"/><rect x="24.8" y="19" width="13" height="1.6" fill="#3aa0b8"/><rect x="37.8" y="19" width="1.5" height="1.6" fill="#d8a0c0"/><rect x="45.5" y="19" width="22" height="1.6" fill="#1a5a98"/><rect x="67.5" y="19" width="8" height="1.6" fill="#3aa0b8"/><rect x="75.5" y="19" width="1" height="1.6" fill="#d8a0c0"/><rect x="7.8" y="22.3" width="17" height="1.6" fill="#1a5a98"/><rect x="24.8" y="22.3" width="13" height="1.6" fill="#3aa0b8"/><rect x="37.8" y="22.3" width="1.5" height="1.6" fill="#d8a0c0"/><rect x="45.5" y="22.3" width="22" height="1.6" fill="#1a5a98"/><rect x="67.5" y="22.3" width="8" height="1.6" fill="#3aa0b8"/><rect x="75.5" y="22.3" width="1" height="1.6" fill="#d8a0c0"/><rect x="8.4" y="33" width="18" height="1.4" fill="#1a5a98"/><rect x="26.4" y="33" width="12.3" height="1.4" fill="#3aa0b8"/><rect x="8.4" y="36.4" width="18" height="1.4" fill="#1a5a98"/><rect x="26.4" y="36.4" width="12.3" height="1.4" fill="#3aa0b8"/><path d="M7.8 26H40M45.5 26H77M8.4 39.5H39" stroke="#ccc" stroke-width=".4"/><circle cx="66.3" cy="35.5" r="5" fill="#eef0e8"/><path d="M62 33L70 38M63 38L70 32M66 30V41" stroke="#c8c090" stroke-width=".7"/></svg></div>
<div class="a" style="left:62px;top:395px;width:83px;height:43px;background:#fff;overflow:hidden;box-shadow:0 .5px 1px rgba(0,0,0,.15)"><svg style="left:0;top:0" width="83" height="43">
<rect x="3.3" y="0" width="2.6" height="6.5" fill="#1a5aa8"/>
<path d="M11.7 3.2H38" stroke="#2a5ab8" stroke-width="1.3" stroke-dasharray="1.5 .4"/><path d="M40 3.2H64" stroke="#aaa" stroke-width=".7" stroke-dasharray="2 .6"/>
<rect x="7.2" y="8.2" width="42.8" height="8" fill="#1a4a8e"/>
<path d="M7.2 12.1H50" stroke="#3a6ab0" stroke-width=".5"/><path d="M14.5 8.2V16.2M21 8.2V16.2M27.5 8.2V16.2M31.5 8.2V16.2M41 8.2V16.2" stroke="#8ab" stroke-width=".4"/>
<rect x="7.2" y="16.2" width="42.8" height="22.4" fill="#f4f6f8"/>
<rect x="7.2" y="33" width="42.8" height="5.6" fill="#d4d8e0"/>
<path d="M14.5 16.2V38.6M21 16.2V38.6M27.5 16.2V38.6M31.5 16.2V38.6M41 16.2V38.6" stroke="#e0e4ea" stroke-width=".4"/>
<g stroke="#999" stroke-width=".6"><path d="M8.5 18.5H13.5M16 18.5H20M22 18.5H27M28 18.5H31M33 18.5H40M42 18.5H49M23 22H27M23 25H27M8.5 35H13.5M16 35H20M22 35H27M33 35H40"/></g>
<path d="M55 30L60.5 25.2L62 26.8L56.5 31.5Z" fill="#5a8ac0"/>
<path d="M62 14.5H75M62 17.5H77M62 21H76M62 23.5H79" stroke="#444" stroke-width=".5"/>
<rect x="61.5" y="14" width="1.2" height="1.2" fill="#333"/><rect x="61.5" y="20.5" width="1.2" height="1.2" fill="#333"/>
<ellipse cx="70" cy="38" rx="10" ry="3" fill="#eef2f8"/>
<circle cx="63.5" cy="31.5" r="1.3" fill="#d04040"/><path d="M61.5 33H65.5L66 38H61.5Z" fill="#2a5ab0"/>
<circle cx="77.5" cy="31.5" r="1.3" fill="#1a3a70"/><path d="M76 33H80L79 39H75.5Z" fill="#3a7ad0"/>
<path d="M68 34V38M72 34V38M70 33V37" stroke="#888" stroke-width=".4"/>
</svg></div>
<svg style="left:99px;top:444.5px" width="4" height="3"><path d="M0 0H3.5L1.75 2.2Z" fill="#555"/></svg>

<!-- main slide -->
<div class="a" id="slide" style="left:167px;top:118px;width:551px;height:309px;background:#f3f3f3;overflow:hidden">
  <div class="a" style="left:0;top:0;width:551px;height:41px;background:#1b4890"></div>
  <svg style="left:0;top:0" width="551" height="41"><path d="M159 41V16L264 14V41Z" fill="#3d6cb0" opacity=".5"/><path d="M118 37L182 8L266 10V14L186 13L132 38Z" fill="#4a78b8" opacity=".55"/><path d="M165 22H262M165 27H262" stroke="#6a90c8" stroke-width="1.2" opacity=".45"/><path d="M266 41V1H377V41Z" fill="#123876" opacity=".45"/><path d="M324 1V29M343 1V29M362 1V29" stroke="#4a74b0" stroke-width="1.6" opacity=".5"/><path d="M290 41V25H403V41Z" fill="#3464aa" opacity=".45"/><path d="M420 41L440 32L480 30L520 33L551 31V41Z" fill="#2c5ca2" opacity=".35"/><path d="M0 41V34L40 30L100 32L118 35V41Z" fill="#2a5aa0" opacity=".3"/></svg>
  <svg style="left:0;top:38px" width="551" height="21"><path d="M0 20V0H551V2.5H29Z" fill="#1b4890"/><path d="M0 19L29 2.5H551" fill="none" stroke="#123a80" stroke-width="1.6"/><path d="M0 20.5V19L29 3H551V20.5Z" fill="#f7f7f7"/></svg>
  <div class="a" style="left:0;top:58px;width:551px;height:60px;background:#2876d0"></div>
  <div class="a" style="left:0;top:118px;width:551px;height:19.5px;background:#f8f8f8"></div>
  <div class="a" style="left:0;top:137.5px;width:551px;height:45px;background:#d3e3f6"></div>
  <div class="a" style="left:0;top:183px;width:551px;height:58px;background:linear-gradient(#f5f5f5,#f1f1f1)"></div>
  <div class="a" style="left:0;top:226px;width:200px;height:1px;background:#8ea2b4"></div>
  <div class="a" style="left:352px;top:226px;width:199px;height:1px;background:#8ea2b4"></div>
  <!-- logo -->
  <svg style="left:30px;top:13px" width="18" height="18"><circle cx="8.7" cy="8.6" r="8.2" fill="#e4ebf3"/><circle cx="8.7" cy="8.6" r="6.6" fill="none" stroke="#8090b0" stroke-width=".7"/><path d="M4.5 9A4.2 4.2 0 0 1 12.9 9Z" fill="#f0a028"/><path d="M5.2 7.3A3.5 3.5 0 0 1 12.2 7.3" fill="none" stroke="#f8d040" stroke-width="1"/><path d="M3.3 10.2C5 9.3 7 10.8 9 10C11 9.3 12.5 10 14.2 10.2V11.5C12.5 11.3 11 10.6 9 11.4C7 12.1 5 10.7 3.3 11.6Z" fill="#2a4a90"/><path d="M4.5 12.5C6.5 12 10.5 12 13 12.5" fill="none" stroke="#5a7ab0" stroke-width=".8"/></svg>
  <div class="t" style="left:51px;top:16px;font-size:8px;color:#fff;font-weight:bold;font-style:italic;letter-spacing:-.3px">上海海洋大学</div>
  <div class="a" style="left:51px;top:27px;width:45px;height:1px;background:rgba(255,255,255,.3)"></div>
  <!-- titles -->
  <div class="t" style="left:161px;top:62.5px;font-size:23px;font-weight:bold;color:#f6c211;-webkit-text-stroke:.4px #f6c211;text-shadow:1px 1px 1px #403a20;letter-spacing:0">热烈欢迎各位家长莅临</div>
  <div class="t" style="left:19px;top:90.5px;font-size:23px;font-weight:bold;color:#f6c211;-webkit-text-stroke:.4px #f6c211;text-shadow:1px 1px 1px #403a20;letter-spacing:0">海洋科学与生态环境学院<span style="letter-spacing:1.2px">2024</span>届本科毕业生家长会</div>
  <div class="t" style="left:58.5px;top:144px;font-size:35px;letter-spacing:.3px;word-spacing:-2.8px;font-weight:bold;color:#1f6bc7;-webkit-text-stroke:.8px #1f6bc7;text-shadow:1px 1px 1px rgba(20,50,100,.35)">凝心聚力 携手推进 共促就业</div>
  <div class="t" style="left:240px;top:217.5px;font-size:17.5px;font-weight:bold;color:#2c68b2;font-family:'Liberation Serif',serif">2024-3-25</div>
  <!-- photo -->
  <svg style="left:0;top:241px" width="551" height="68" viewBox="0 0 551 68">
    <defs>
      <linearGradient id="sky" x1="0" y1="0" x2="0" y2="1"><stop offset="0" stop-color="#1c5ec6"/><stop offset=".3" stop-color="#2e7ad8"/><stop offset=".55" stop-color="#7ab0e4"/></linearGradient>
      <linearGradient id="lake" x1="0" y1="0" x2="0" y2="1"><stop offset="0" stop-color="#5a8cc8"/><stop offset=".35" stop-color="#2c5ea6"/><stop offset="1" stop-color="#0e2e6a"/></linearGradient>
      <linearGradient id="hedge" x1="0" y1="0" x2="0" y2="1"><stop offset="0" stop-color="#52b040"/><stop offset="1" stop-color="#2a7a28"/></linearGradient>
    </defs>
    <rect width="551" height="68" fill="url(#sky)"/>
    <linearGradient id="skyr" x1="0" y1="0" x2="1" y2="0"><stop offset="0" stop-color="#cfe2f6" stop-opacity="0"/><stop offset="1" stop-color="#cfe2f6" stop-opacity=".5"/></linearGradient><path d="M300 36C380 26 470 14 551 6V38H300Z" fill="url(#skyr)"/><path d="M225 27C300 20 420 12 551 4V14C450 20 330 28 225 30Z" fill="#d8e8f8" opacity=".22"/>
    <path d="M140 24C180 22 230 21 270 21V23C230 24 180 25 140 26Z" fill="#e0ecf8" opacity=".45"/>
    <path d="M400 13C430 11 460 10 490 10V12C460 13 430 14 400 15Z" fill="#e0ecf8" opacity=".3"/>
    <!-- buildings -->
    <rect x="0" y="21" width="26" height="14" fill="#7e848a"/>
    <path d="M2 25H24M2 29H24" stroke="#9aa0a6" stroke-width="1"/>
    <rect x="26" y="22" width="10" height="14" fill="#2c3036"/>
    <rect x="34" y="14" width="19" height="21" fill="#e2e4e6"/>
    <path d="M36 18H51M36 22H51M36 26H51M36 30H51" stroke="#6a6e74" stroke-width=".9"/>
    <rect x="52" y="14" width="22" height="21" fill="#2a2c32"/>
    <path d="M30 13H76V15H30Z" fill="#3a3c42"/>
    <path d="M74 21L140 23L206 27V37H74Z" fill="#2e343e"/>
    <path d="M78 27H200M78 31H200" stroke="#5a626c" stroke-width=".9"/>
    <rect x="196" y="27" width="10" height="5" fill="#c8ccd0"/>
    <rect x="206" y="32" width="24" height="4" fill="#3a4048"/>
    <rect x="273" y="23" width="17" height="14" fill="#d4d2c8"/>
    <rect x="284" y="24" width="11" height="12" fill="#3a3e46"/>
    <rect x="295" y="33" width="42" height="5" fill="#aeb4ba"/>
    <rect x="360" y="30" width="53" height="8" fill="#c4c2ba"/>
    <path d="M450 27L551 25V38H450Z" fill="#c4c2b8"/>
    <path d="M452 30H551M452 34H551" stroke="#8a8a84" stroke-width="1"/>
    <rect x="450" y="24" width="14" height="3" fill="#e8e8e4"/>
    <!-- ground left -->
    <path d="M0 34H260V42H0Z" fill="#2e6a30"/>
    <path d="M0 37L120 36L250 38L262 44L200 50L0 52Z" fill="#66bc40"/>
    <path d="M20 40C60 38 120 38 170 41L160 46C110 45 60 46 20 47Z" fill="#82cc52"/>
    <g fill="#2a5e2a"><ellipse cx="50" cy="36" rx="7" ry="4"/><ellipse cx="75" cy="35" rx="6" ry="3.5"/><ellipse cx="100" cy="37" rx="8" ry="3.5"/><ellipse cx="130" cy="36" rx="6" ry="3"/><ellipse cx="160" cy="37" rx="9" ry="3"/><ellipse cx="200" cy="37" rx="10" ry="2.5"/><ellipse cx="240" cy="38" rx="12" ry="2"/></g>
    <path d="M0 30C8 26 14 30 18 34C24 30 30 33 32 38L24 64H0Z" fill="#1f5a24"/>
    <path d="M60 45H108V47H60Z" fill="#3a4a40" opacity=".6"/>
    <path d="M0 50L60 48L120 47L215 46L175 58L152 68H0Z" fill="url(#hedge)"/>
    <path d="M0 62C40 58 90 56 130 57L118 68H0Z" fill="#2a7028"/>
    <path d="M30 56C50 52 80 52 100 53L95 57C75 56 50 57 30 59Z" fill="#5ab840" opacity=".7"/>
    <!-- horizon right -->
    <path d="M230 37.5H551V40.5H230Z" fill="#5aaa48"/>
    <!-- lake -->
    <path d="M152 68C165 62 185 54 210 47C240 42 260 41 290 40H551V68Z" fill="url(#lake)"/>
    <path d="M273 41H295V54H273Z" fill="#a8acaa" opacity=".45"/>
    <path d="M200 49C230 44 250 42 275 41V43C250 44 225 46 205 51Z" fill="#2a5a50" opacity=".6"/>
    <!-- lily pads right -->
    <path d="M353 68L360 62C380 61 405 60 425 58L440 48L470 42L551 38V68Z" fill="#48a83a"/>
    <path d="M430 68L445 56C470 52 490 48 510 46L551 44V68Z" fill="#3c9a32"/>
    <path d="M470 44C495 38 525 35 551 35V52C530 50 500 49 475 50Z" fill="#276a28"/>
    <path d="M353 68L360 63C380 62 400 62 418 63L425 68Z" fill="#62c248"/>
    <path d="M520 58L551 56V68H526Z" fill="#8a9a88" opacity=".55"/>
  </svg>
</div>
<!-- scrollbar canvas -->
<svg style="left:726.5px;top:95px" width="4" height="3"><path d="M0 2.5H3.5L1.75 .3Z" fill="#555"/></svg>
<div class="a" style="left:727px;top:102px;width:3px;height:19px;background:#dadada;border-radius:2px"></div>
<svg style="left:726.5px;top:437px" width="4" height="3"><path d="M0 0H3.5L1.75 2.2Z" fill="#555"/></svg>


<!-- right sidebar icons -->
<div class="a" style="left:743px;top:103px;width:8px;height:1px;background:#666"></div>
<svg style="left:742.5px;top:116px" width="10" height="9"><path d="M.5 2H9.5M.5 6.5H9.5" stroke="#4a4a4a" stroke-width="1"/><circle cx="6.5" cy="2" r="1.5" fill="#f1efef" stroke="#4a4a4a" stroke-width="1"/><circle cx="3.5" cy="6.5" r="1.5" fill="#f1efef" stroke="#4a4a4a" stroke-width="1"/></svg>
<svg style="left:742.5px;top:135px" width="10" height="10"><path d="M5 .6L6.3 3.6L9.5 3.8L7 6L7.8 9.2L5 7.5L2.2 9.2L3 6L.5 3.8L3.7 3.6Z" fill="none" stroke="#4a4a4a" stroke-width="1" stroke-linejoin="round"/></svg>
<svg style="left:742.5px;top:155px" width="10" height="10"><rect x=".5" y=".5" width="6" height="5.5" rx="1" fill="none" stroke="#4a4a4a" stroke-width="1"/><rect x="3" y="3.5" width="6.5" height="5.5" rx="1" fill="#f1efef" stroke="#4a4a4a" stroke-width="1"/></svg>
<svg style="left:742.5px;top:175.5px" width="10" height="10"><path d="M4.5 9H1.5A1 1 0 0 1 .5 8V1.5A1 1 0 0 1 1.5 .5H8A1 1 0 0 1 9 1.5V4" fill="none" stroke="#4a4a4a" stroke-width="1"/><path d="M.5 6L3 3.5L5 5.5" fill="none" stroke="#4a4a4a" stroke-width="1"/><path d="M5.5 9.5L6 7.5L8.5 5L9.5 6L7 8.5Z" fill="#4a4a4a"/></svg>
<svg style="left:742.5px;top:196px" width="10" height="10"><path d="M1 9L6.5 3.5M5.5 1.5L6.5 3.5L8.5 4.5M2 2L3 3M8 7L9 8M1.5 4.5H2.5M7.5 .5V1.5" fill="none" stroke="#4a4a4a" stroke-width="1"/><circle cx="4" cy="7" r="1.2" fill="#4a4a4a"/></svg>
<svg style="left:742.5px;top:216px" width="10" height="10"><path d="M.5 1V9L4.5 8V1.5Z M4.5 1.5L9 .8V4 M4.5 8L6 8.5" fill="none" stroke="#4a4a4a" stroke-width="1"/><circle cx="7.5" cy="7" r="1.8" fill="none" stroke="#4a4a4a" stroke-width="1"/></svg>
<svg style="left:742.5px;top:236px" width="10" height="10"><circle cx="5" cy="5" r="4.4" fill="none" stroke="#4a4a4a" stroke-width="1"/><path d="M3.6 3.8A1.4 1.4 0 1 1 5 5.3V6" fill="none" stroke="#4a4a4a" stroke-width="1"/><circle cx="5" cy="7.6" r=".6" fill="#4a4a4a"/></svg>
<svg style="left:742.5px;top:256px" width="10" height="10"><path d="M3 .5L.5 2.5L1.8 4.5L2.8 4V9.5H7.2V4L8.2 4.5L9.5 2.5L7 .5C6.5 1.5 3.5 1.5 3 .5Z" fill="none" stroke="#4a4a4a" stroke-width="1" stroke-linejoin="round"/><path d="M5 6L7 8" stroke="#4a4a4a" stroke-width="1"/></svg>
<svg style="left:742.5px;top:279px" width="10" height="3"><circle cx="1.5" cy="1.5" r="1" fill="#4a4a4a"/><circle cx="5" cy="1.5" r="1" fill="#4a4a4a"/><circle cx="8.5" cy="1.5" r="1" fill="#4a4a4a"/></svg>

<!-- bottom meeting bar -->
<div class="a" style="left:0;top:447px;width:800px;height:26px;background:#fff"></div>
<div class="a" style="left:0;top:472.5px;width:800px;height:1.5px;background:#e8eef2"></div>
<svg style="left:13px;top:449px" width="11" height="14"><rect x="2.8" y="0.5" width="5" height="8" rx="2.5" fill="#3a3a3a"/><path d="M1 6A4.3 4.3 0 0 0 9.6 6M5.3 10.5V12.5M2.5 12.8H8" fill="none" stroke="#3a3a3a" stroke-width="1.1"/><path d="M1 11.5L10 1.5" stroke="#e86a6a" stroke-width="1.2"/></svg>
<div class="rl" style="left:6.5px;top:464px;font-size:6px;color:#333">解除静音</div>
<svg style="left:34px;top:458px" width="6" height="4"><path d="M.5 3L3 .5L5.5 3" fill="none" stroke="#444" stroke-width="1"/></svg>
<svg style="left:51.5px;top:451px" width="15" height="10"><rect x="0" y=".5" width="9.5" height="8.5" rx="1" fill="#3a3a3a"/><path d="M9.5 4L13.5 1.2V8.3L9.5 5.5Z" fill="#3a3a3a"/><path d="M.5 9L9.5 .5" stroke="#e86a6a" stroke-width="1.2"/></svg>
<div class="rl" style="left:46.5px;top:464px;font-size:6px;color:#333">开启视频</div>
<svg style="left:74px;top:458px" width="6" height="4"><path d="M.5 3L3 .5L5.5 3" fill="none" stroke="#444" stroke-width="1"/></svg>
<!-- center tools -->
<svg style="left:249px;top:450px" width="13" height="11"><rect x=".5" y=".5" width="12" height="8.5" rx="1" fill="#1f7a55"/><path d="M4 6.5C4.5 4.5 6 3.5 8 3.5M6.8 2.3L8.5 3.5L6.8 4.8" fill="none" stroke="#fff" stroke-width=".9"/><path d="M3 10.5H10" stroke="#3a3a3a" stroke-width="1"/></svg>
<div class="rl" style="left:243px;top:464px;font-size:6px;color:#333">共享屏幕</div>
<svg style="left:270.5px;top:458px" width="6" height="4"><path d="M.5 3L3 .5L5.5 3" fill="none" stroke="#444" stroke-width="1"/></svg>
<svg style="left:288.5px;top:449px" width="10" height="12"><path d="M4.8 .3L9.3 2V6C9.3 8.8 7.2 10.6 4.8 11.5C2.4 10.6 .3 8.8 .3 6V2Z" fill="#3a3a3a"/><circle cx="4.8" cy="4.6" r="1.4" fill="none" stroke="#fff" stroke-width=".9"/><path d="M2.5 8.3C3.2 6.8 6.4 6.8 7.1 8.3" fill="none" stroke="#fff" stroke-width=".9"/></svg>
<div class="rl" style="left:287px;top:464px;font-size:6px;color:#333">安全</div>
<svg style="left:320px;top:449px" width="12" height="12"><circle cx="4.8" cy="2.8" r="2.4" fill="#3a3a3a"/><path d="M0 10.5C0 7.3 2.2 6 4.8 6C6 6 6.8 6.2 7.3 6.5V10.5Z" fill="#3a3a3a"/><circle cx="8.8" cy="8.3" r="2.8" fill="#fff" stroke="#3a3a3a" stroke-width="1"/><path d="M8.8 6.8V9.8M7.3 8.3H10.3" stroke="#3a3a3a" stroke-width=".9"/></svg>
<div class="rl" style="left:320px;top:464px;font-size:6px;color:#333">邀请</div>
<svg style="left:362px;top:449px" width="13" height="12"><circle cx="6.3" cy="3" r="2.8" fill="#3a3a3a"/><path d="M.5 11C.5 7.8 3 6.6 6.3 6.6S12 7.8 12 11Z" fill="#3a3a3a"/></svg>
<div class="rl" style="left:347px;top:464px;font-size:6px;color:#333;letter-spacing:-.1px">管理成员(99+)</div>
<svg style="left:402px;top:450px" width="11" height="12"><path d="M.5 .5H10.5V8.5H5L2.5 11V8.5H.5Z" fill="#3a3a3a"/><circle cx="3" cy="4.5" r=".8" fill="#fff"/><circle cx="5.5" cy="4.5" r=".8" fill="#fff"/><circle cx="8" cy="4.5" r=".8" fill="#fff"/></svg>
<div class="rl" style="left:401.5px;top:464px;font-size:6px;color:#333">聊天</div>
<svg style="left:433.5px;top:449px" width="13" height="13"><circle cx="6.3" cy="6.3" r="6" fill="#3a3a3a"/><rect x="3.8" y="3.8" width="5" height="5" rx=".8" fill="#fff"/></svg>
<div class="rl" style="left:427px;top:464px;font-size:6px;color:#333">结束录制</div>
<svg style="left:455px;top:458px" width="6" height="4"><path d="M.5 3L3 .5L5.5 3" fill="none" stroke="#444" stroke-width="1"/></svg>
<svg style="left:472px;top:449px" width="13" height="12"><rect x="3.8" y=".3" width="5.2" height="4.8" rx=".6" fill="#3a3a3a"/><rect x=".3" y="6.3" width="5.2" height="4.8" rx=".6" fill="#3a3a3a"/><rect x="7" y="6.3" width="5.2" height="4.8" rx=".6" fill="#3a3a3a"/></svg>
<div class="rl" style="left:467px;top:464px;font-size:6px;color:#333">分组讨论</div>
<svg style="left:505.5px;top:449px" width="12" height="12"><rect x=".3" y=".5" width="4.6" height="4.6" rx=".6" fill="#3a3a3a"/><rect x=".3" y="6.5" width="4.6" height="4.6" rx=".6" fill="#3a3a3a"/><rect x="6.3" y="6.5" width="4.6" height="4.6" rx=".6" fill="#3a3a3a"/><path d="M8.6 .4L11 2.8L8.6 5.2L6.2 2.8Z" fill="none" stroke="#3a3a3a" stroke-width="1"/></svg>
<div class="rl" style="left:505px;top:464px;font-size:6px;color:#333">应用</div>
<svg style="left:539px;top:449px" width="13" height="13"><path d="M6.3 .3L7.6 1.8L9.6 1.2L10 3.2L12 4L11.2 6L12 8L10 8.8L9.6 10.8L7.6 10.2L6.3 11.8L5 10.2L3 10.8L2.6 8.8L.6 8L1.4 6L.6 4L2.6 3.2L3 1.2L5 1.8Z" fill="#3a3a3a"/><circle cx="6.3" cy="6" r="2" fill="#fff"/></svg>
<div class="rl" style="left:538px;top:464px;font-size:6px;color:#333">设置</div>
<!-- speaking tooltip -->
<div class="a" style="left:751.5px;top:450px;width:42px;height:20.5px;border:1px solid #f0d2d2;border-radius:3px;background:#fff"></div>
<div class="rl" style="left:757px;top:457px;font-size:7px;letter-spacing:.2px;color:#d45050">结束会议</div>
<div class="a" style="left:632px;top:443px;width:132px;height:18.5px;background:#2b2e33;border-radius:0 0 3px 3px"></div>
<svg style="left:638px;top:448px" width="8" height="10"><rect x="2" y="0" width="4" height="6" rx="2" fill="#b05060"/><path d="M.8 4.5A3.2 3.2 0 0 0 7.2 4.5M4 8V9.5" fill="none" stroke="#b05060" stroke-width=".9"/><path d="M.5 8.5L7.5 .5" stroke="#e07070" stroke-width="1"/></svg>
<div class="a" style="left:651.5px;top:446px;width:1px;height:13px;background:#3e4248"></div>
<div class="rl" style="left:656px;top:449.5px;font-size:6px;color:#e8e8e8">正在讲话:</div>
<svg style="left:732px;top:446px" width="26" height="13"><path d="M6 .5L11.5 6.5L6 12.5L.5 6.5Z" fill="#45494f"/><path d="M13 .5L18.5 6.5L13 12.5L7.5 6.5Z" fill="#50545a"/><path d="M20 .5L25.5 6.5L20 12.5L14.5 6.5Z" fill="#45494f"/></svg>
<!-- taskbar -->
<div class="a" style="left:0;top:473.5px;width:800px;height:26.5px;background:linear-gradient(#cde3e9,#d0e5eb);border-top:1px solid #c6d6da"></div>
<svg style="left:212px;top:480.5px" width="13" height="13"><defs><linearGradient id="wl" x1="0" y1="0" x2="1" y2="1"><stop offset="0" stop-color="#48b8f8"/><stop offset="1" stop-color="#1076d8"/></linearGradient></defs><path d="M0 0H6V6H0ZM7 0H13V6H7ZM0 7H6V13H0ZM7 7H13V13H7Z" fill="url(#wl)"/></svg>
<div class="a" style="left:233px;top:479px;width:118px;height:16px;border-radius:8px;background:#f2f7f9;border:1px solid #d2e0e6"></div>
<svg style="left:238.5px;top:483.5px" width="9" height="8"><circle cx="3.5" cy="3.3" r="2.6" fill="none" stroke="#222" stroke-width="1.2"/><path d="M5.5 5.3L7.8 7.5" stroke="#222" stroke-width="1.3"/></svg>
<div class="rl" style="left:252px;top:482.5px;font-size:9px;color:#555">搜索</div>
<svg style="left:324px;top:481px" width="28" height="13"><ellipse cx="7" cy="10.5" rx="6.5" ry="2" fill="#3a9a50"/><path d="M3 8C2 5 4 3 7 4C8 1 11 2 11 5C12 7 10 9 7 9Z" fill="#f08ab0"/><circle cx="7" cy="6.3" r="1.3" fill="#f8d040"/><ellipse cx="21" cy="10.5" rx="5.5" ry="2" fill="#4aa040"/><path d="M18 7C17 3 19 1 21 2C23 1 25 3 24 7Z" fill="#d070c8"/><path d="M13 11.5L18 10" stroke="#6ab8d8" stroke-width="1.5"/></svg>
<svg style="left:359px;top:481px" width="11" height="12"><rect x="3" y="0" width="8" height="8" fill="#c8c8c8"/><path d="M0 3H2.5V9.5H8V12H0Z" fill="#111"/><rect x="3" y="1.5" width="6" height="6" fill="#fff" opacity=".6"/></svg>
<svg style="left:383px;top:481px" width="14" height="16"><path d="M0 1.5H5L6.5 3H13V11.5H0Z" fill="#f5c030"/><rect x="0" y="4" width="13" height="7.5" fill="#fcd451"/><path d="M1 8.5C3 6.5 10 6.5 12 8.5V11H1Z" fill="#1a6fd0"/><rect x="5" y="14.5" width="3" height="1" fill="#555"/></svg>
<svg style="left:407px;top:480px" width="14" height="14"><defs><linearGradient id="ed" x1="0" y1="0" x2="1" y2="1"><stop offset="0" stop-color="#42d08a"/><stop offset=".5" stop-color="#1a90d8"/><stop offset="1" stop-color="#0a4aa8"/></linearGradient></defs><circle cx="6.8" cy="6.8" r="6.5" fill="url(#ed)"/><path d="M3.8 7.5C3.8 5.3 5.5 4.3 7 4.3C9 4.3 10 5.5 10 6.8H5.8C6 8.8 8.3 9.5 11 8.5C10.5 10.8 8.5 12 6.5 11.8C5 11.6 3.8 10 3.8 7.5Z" fill="#fff" opacity=".9"/></svg>
<svg style="left:432px;top:481px" width="13" height="13"><path d="M6.2 0L12.3 2V7C12.3 10 9.5 12 6.2 13C3 12 .2 10 .2 7V2Z" fill="#1d5fd6"/><path d="M4.5 3.5V10H9" fill="none" stroke="#fff" stroke-width="2"/></svg>
<svg style="left:456px;top:481px" width="12" height="12"><path d="M.5 1H11.5V11.5H.5Z" fill="#20c27a"/><path d="M3 4.5C4 7 8 7 9 4.5" fill="none" stroke="#fff" stroke-width="1.1"/></svg>
<svg style="left:480px;top:480px" width="13" height="14"><circle cx="6.5" cy="7" r="5.3" fill="#5cc428"/><path d="M3.2 7.5H9.8C9.8 5.3 8.3 4 6.5 4C4.5 4 3.2 5.5 3.2 7.5C3.2 9.5 4.7 10.8 6.5 10.8C8 10.8 9.2 10 9.6 9" fill="none" stroke="#fff" stroke-width="1.4"/><path d="M1 12C0 10 3 4 8 1.5C11 0 13 1 12.5 2.5" fill="none" stroke="#3a9a20" stroke-width="1"/></svg>
<svg style="left:503.5px;top:480.5px" width="13" height="13"><circle cx="6.3" cy="6.3" r="6" fill="#1a94e0"/><path d="M2 6.5C5 4 9 3.5 11 4.5M1.5 8.5C4 7.5 8 7 10.5 8" fill="none" stroke="#fff" stroke-width="1.2"/></svg>
<div class="a" style="left:524px;top:476px;width:18px;height:21px;background:#eaf2f6;border-radius:3px;border:1px solid #dde8ee"></div>
<svg style="left:528px;top:481px" width="12" height="12"><rect width="12" height="12" rx="2" fill="#1a72f0"/><path d="M1.5 8.5L4 4.5L6 7L8 4.5L10.5 8.5Z" fill="#fff"/></svg>
<div class="a" style="left:530px;top:495.5px;width:8px;height:1.5px;background:#2a7a6a;border-radius:1px"></div>
<svg style="left:550px;top:482px" width="15" height="11"><path d="M.5 .5H4L5.8 6L7.5 .5H9.5L11.3 6L13 .5H14.5L11.8 10.5H10.3L8.5 5L6.8 10.5H5.2Z" fill="#e23a24"/></svg>
<div class="a" style="left:556px;top:495.5px;width:3px;height:1.2px;background:#777"></div>
<div class="a" style="left:571px;top:476px;width:21px;height:21px;background:#f3e1e1;border-radius:3px"></div>
<svg style="left:575px;top:482px" width="14" height="11"><ellipse cx="5.5" cy="4.8" rx="5.3" ry="4.5" fill="#2ac45a"/><ellipse cx="10" cy="7.5" rx="3.8" ry="3" fill="#2ac45a" stroke="#f3e1e1" stroke-width=".8"/><circle cx="9" cy="7.5" r=".5" fill="#fff"/><circle cx="11" cy="7.5" r=".5" fill="#fff"/></svg>
<div class="a" style="left:579.5px;top:495.5px;width:4px;height:1.5px;background:#c04040"></div>
<!-- tray -->
<svg style="left:633px;top:484.5px" width="8" height="5"><path d="M.5 4L3.8 .8L7 4" fill="none" stroke="#222" stroke-width="1"/></svg>
<svg style="left:649px;top:482px" width="11" height="11"><path d="M1.5 5A4 4 0 0 1 8.5 2.5M9.5 5.5A4 4 0 0 1 2.5 8.5M7 .5L8.8 2.5L6.5 3.5M4 10.5L2.2 8.5L4.5 7.5" fill="none" stroke="#333" stroke-width="1"/><circle cx="7.5" cy="8.3" r="2" fill="#e02020"/></svg>
<svg style="left:667px;top:482px" width="7" height="11"><rect x="1.5" y="0" width="4" height="7" rx="2" fill="none" stroke="#333" stroke-width="1"/><path d="M.5 5.5A3 3 0 0 0 6.5 5.5M3.5 8.5V10.5" fill="none" stroke="#333" stroke-width="1"/></svg>
<div class="rl" style="left:685px;top:481.5px;font-size:9px;color:#222">中</div>
<svg style="left:702.5px;top:483px" width="10" height="8"><path d="M.5 3A6.5 6.5 0 0 1 9.5 3M2 4.8A4.2 4.2 0 0 1 8 4.8M3.5 6.5A2 2 0 0 1 6.5 6.5" fill="none" stroke="#333" stroke-width="1"/><circle cx="5" cy="7.5" r=".7" fill="#333"/></svg>
<svg style="left:714.5px;top:483px" width="9" height="8"><path d="M.5 2.5H2.5L5 .5V7.5L2.5 5.5H.5Z" fill="none" stroke="#333" stroke-width="1"/><path d="M6.5 2.5A2 2 0 0 1 6.5 5.5M7.5 1A4 4 0 0 1 7.5 7" fill="none" stroke="#333" stroke-width=".9"/></svg>
<svg style="left:728px;top:482px" width="10" height="10"><path d="M.5 2V9H9.5V4.5L6 4.5L4 2Z" fill="#333"/><path d="M3 6L6 5" stroke="#888" stroke-width=".8"/></svg>
<div class="t" style="left:760.5px;top:480px;font-size:6.7px;color:#222">19:32</div>
<div class="t" style="left:746px;top:489.5px;font-size:6.7px;color:#222">2024/3/25</div>
<svg style="left:782px;top:482px" width="9" height="11"><path d="M4.5 .5C2.3 .5 1.5 2.5 1.5 4V7L.3 8.8H8.7L7.5 7V4C7.5 2.5 6.7 .5 4.5 .5ZM3.3 9.5A1.2 1.2 0 0 0 5.7 9.5" fill="#222"/></svg>
</body></html>
